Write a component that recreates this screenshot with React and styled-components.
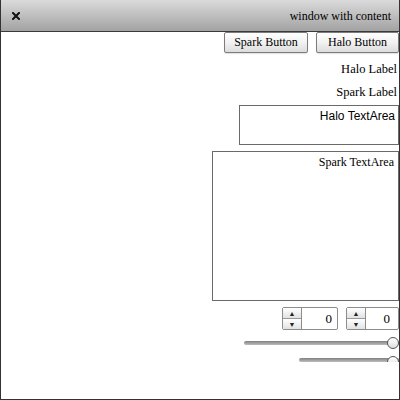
import styled, { createGlobalStyle } from 'styled-components';

const GlobalStyle = createGlobalStyle`
    html, body {
        margin: 0;
        padding: 0;
        background: #fff;
    }
`;

const serif = `"Liberation Serif", "Times New Roman", serif`;
const sans = `"Liberation Sans", Arial, sans-serif`;

const App = () => {
    return (
        <Window>
            <GlobalStyle />
            <TitleBar>
                <CloseIcon viewBox="0 0 8 8">
                    <path d="M1 1 L7 7 M7 1 L1 7" stroke="#111" strokeWidth="2.2" strokeLinecap="square" />
                </CloseIcon>
                <Title>window with content</Title>
            </TitleBar>

            <Content>
                <ButtonRow>
                    <Button width={84}>Spark Button</Button>
                    <Button width={83}>Halo Button</Button>
                </ButtonRow>

                <Label>Halo Label</Label>
                <Label>Spark Label</Label>

                <TextArea width={160} height={40} font={sans} pad={3}>Halo TextArea</TextArea>
                <TextArea width={187} height={150} font={serif} pad={4}>Spark TextArea</TextArea>

                <StepperRow>
                    <Stepper width={56} pad={5}>
                        <Spinner>
                            <SpinButton>▲</SpinButton>
                            <SpinButton>▼</SpinButton>
                        </Spinner>
                        <StepperValue>0</StepperValue>
                    </Stepper>
                    <Stepper width={53} pad={8}>
                        <Spinner>
                            <SpinButton>▲</SpinButton>
                            <SpinButton>▼</SpinButton>
                        </Spinner>
                        <StepperValue>0</StepperValue>
                    </Stepper>
                </StepperRow>

                <Slider width={155} height={14}>
                    <Track />
                    <Thumb />
                </Slider>
                <Slider width={100} height={6} clipped>
                    <Track />
                    <Thumb clipped />
                </Slider>
            </Content>
        </Window>
    );
}


/** Styled components */
const Window = styled.div`
    width: 400px;
    height: 400px;
    box-sizing: border-box;
    border: 1px solid #333;
    border-top: none;
    display: flex;
    flex-direction: column;
    overflow: hidden;
    font-family: ${serif};
    font-size: 12px;
    color: #000;
`;

const TitleBar = styled.div`
    height: 31px;
    flex-shrink: 0;
    display: flex;
    align-items: center;
    justify-content: space-between;
    padding: 0 8px 0 11px;
    background: linear-gradient(#dadada, #c4c4c4 40%, #a2a2a2);
    border-bottom: 1px solid #3a3a3a;
`;

const CloseIcon = styled.svg`
    width: 8px;
    height: 8px;
    filter: drop-shadow(0 0 0.6px #fff);
`;

const Title = styled.span`
    font-size: 12px;
    line-height: 14px;
`;

const Content = styled.div`
    flex: 1;
    display: flex;
    flex-direction: column;
    align-items: flex-end;
    gap: 6px;
`;

const ButtonRow = styled.div`
    display: flex;
    gap: 8px;
`;

const Button = styled.button`
    width: ${p => p.width}px;
    height: 21px;
    padding: 0;
    border: 1px solid #7c7c7c;
    border-radius: 2px;
    background: linear-gradient(#ffffff, #f2f2f2 50%, #dcdcdc);
    font-family: ${serif};
    font-size: 12px;
    color: #000;
    box-shadow: 0 1px 1px rgba(0, 0, 0, 0.12);
`;

const Label = styled.div`
    height: 17px;
    box-sizing: border-box;
    padding: 3px 2px 0 0;
    font-size: 12.5px;
    line-height: 14px;
`;

const TextArea = styled.div`
    width: ${p => p.width}px;
    height: ${p => p.height}px;
    box-sizing: border-box;
    border: 1px solid #6a6a6a;
    padding: 3px ${p => p.pad}px 0 0;
    text-align: right;
    font-family: ${p => p.font};
    font-size: 12px;
    line-height: 14px;
`;

const StepperRow = styled.div`
    display: flex;
    gap: 8px;
`;

const Stepper = styled.div`
    width: ${p => p.width}px;
    height: 23px;
    box-sizing: border-box;
    display: flex;
    border: 1px solid #8c8c8c;
    border-radius: 2px;
    padding-right: ${p => p.pad}px;
    background: #fff;
`;

const Spinner = styled.div`
    width: 18px;
    display: flex;
    flex-direction: column;
    border-right: 1px solid #8c8c8c;
`;

const SpinButton = styled.div`
    flex: 1;
    display: flex;
    align-items: center;
    justify-content: center;
    font-family: ${sans};
    font-size: 7px;
    color: #222;
    background: linear-gradient(#ffffff, #e2e2e2);

    & + & {
        border-top: 1px solid #9a9a9a;
    }
`;

const StepperValue = styled.div`
    flex: 1;
    display: flex;
    align-items: center;
    justify-content: flex-end;
    font-size: 13px;
`;

const Slider = styled.div`
    position: relative;
    width: ${p => p.width}px;
    height: ${p => p.height}px;
    overflow: ${p => (p.clipped ? 'hidden' : 'visible')};
    display: flex;
    align-items: ${p => (p.clipped ? 'flex-end' : 'center')};
`;

const Track = styled.div`
    width: 100%;
    height: 4px;
    border-radius: 2px;
    background: linear-gradient(#808080, #bdbdbd);
`;

const Thumb = styled.div`
    position: absolute;
    right: 0;
    top: ${p => (p.clipped ? '0' : '50%')};
    margin-top: ${p => (p.clipped ? '0' : '-6px')};
    width: 12px;
    height: 12px;
    box-sizing: border-box;
    border-radius: 50%;
    border: 1px solid #555;
    background: linear-gradient(#ffffff, #dedede);
`;


export default App;
